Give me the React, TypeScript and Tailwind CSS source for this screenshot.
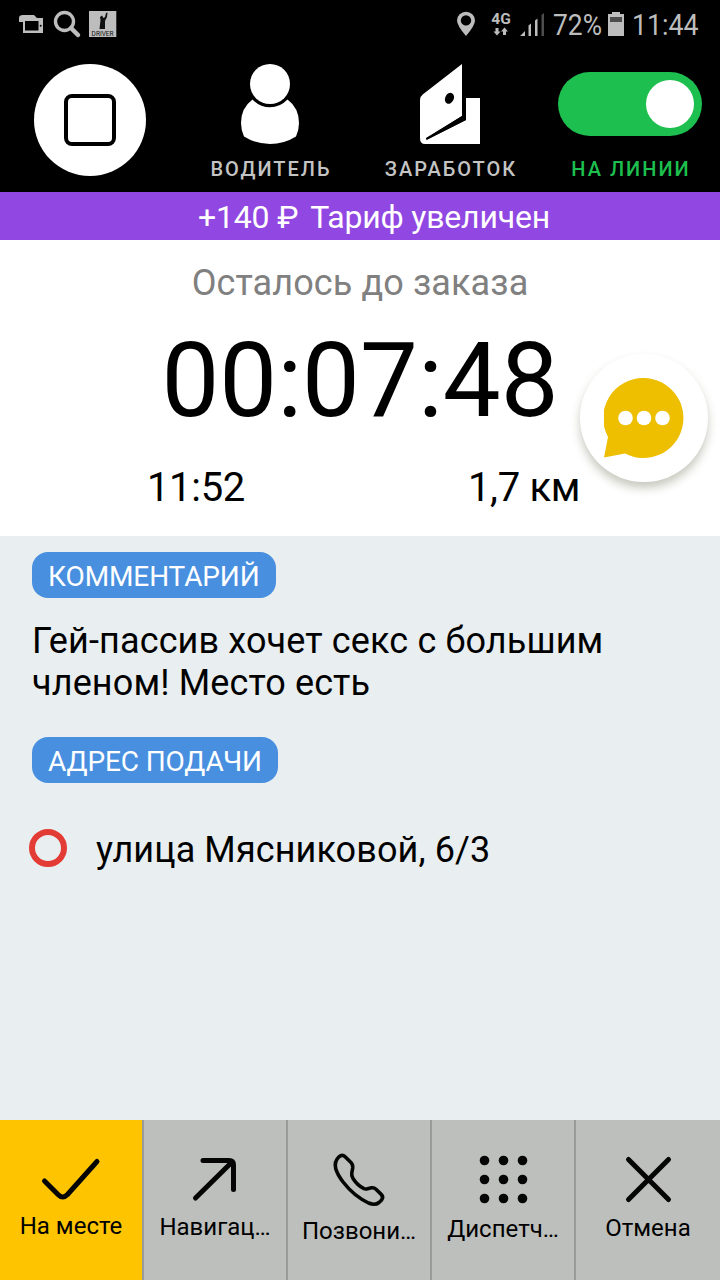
import React from "react";

interface Action {
  id: string;
  label: string;
  labelClass: string;
  icon: React.ReactNode;
}

const DOTS = [13.5, 32.5, 51.5];

const actions: Action[] = [
  {
    id: "arrived",
    label: "На месте",
    labelClass: "pt-0",
    icon: <path d="M5.500 33L19 46.500Q23.700 51.500 28.500 46.500L58 13.500" />,
  },
  {
    id: "nav",
    label: "Навигац…",
    labelClass: "pt-px",
    icon: <path d="M20 12.500H46Q50.500 12.500 50.500 17V41.500M12.500 50L49 14" />,
  },
  {
    id: "call",
    label: "Позвони…",
    labelClass: "pt-[5px]",
    icon: (
      <path
        strokeWidth={3.6}
        d="M12 8.8Q15.200 6 18.400 9L24 14.500Q26 16.500 25.700 20L24.800 25Q24.300 28 26 30.500Q30.500 37.500 37 40.700Q38.500 41.300 40.500 40.700L44.500 39.800Q47 39.300 49 41.300L54.200 46.400Q57 49.200 54.400 52.200L52 54.500Q48 57.800 41.500 55Q27 48 16.500 34.500Q10.500 27 8.700 20.500Q7 13.500 12 8.800Z"
      />
    ),
  },
  {
    id: "dispatch",
    label: "Диспетч…",
    labelClass: "pt-[3px]",
    icon: DOTS.map((y) =>
      DOTS.map((x) => <circle key={`${x}-${y}`} cx={x} cy={y - 1} r={4.8} fill="#050505" stroke="none" />)
    ),
  },
  {
    id: "cancel",
    label: "Отмена",
    labelClass: "pt-[2px]",
    icon: <path d="M12.500 11.500L52.500 51.500M52.500 11.500L12.500 51.500" />,
  },
];

function StatusBar() {
  return (
    <div className="flex h-12 items-center justify-between pl-[18px] pr-[21px] text-[#bdbdbd]">
      <svg width="100" height="32" viewBox="18 8 100 32" fill="#bdbdbd">
        <path d="M19 22V18Q19 15 23 15H34L37 18H43V33H23V22Z" />
        <path d="M25 21H38.500V30.500H25Z" fill="#000" />
        <circle cx="40.700" cy="25.700" r="1" fill="#000" />
        <circle cx="64.500" cy="21.500" r="9" fill="none" stroke="#bdbdbd" strokeWidth="3.400" />
        <path d="M71 28L78 35" stroke="#bdbdbd" strokeWidth="4.500" strokeLinecap="round" />
        <path d="M89 11H116.300V37H89Z" />
        <path d="M99.500 29L100.500 20L100 17L102 15.500L103.500 18L105 17L106 13L107.500 12.500L107 17L105 21V29Z" fill="#111" />
        <text x="102.600" y="36" textAnchor="middle" textLength="22" lengthAdjust="spacingAndGlyphs" fontSize="7" fill="#111">
          DRIVER
        </text>
      </svg>
      <div className="flex items-center">
        <svg width="90" height="32" viewBox="456 8 90 32" fill="#bdbdbd">
          <path fillRule="evenodd" d="M466 36Q457 25.500 457 20.500A9 8.700 0 0 1 475 20.500Q475 25.500 466 36ZM466 15.200A5.200 5.200 0 1 0 466 25.600A5.200 5.200 0 1 0 466 15.200Z" />
          <text x="501" y="24.300" textAnchor="middle" fontSize="15" fontWeight="700" textLength="19.500" lengthAdjust="spacingAndGlyphs">
            4G
          </text>
          <path d="M495.500 28H498.500V31.500H500.500L497 35.500L493.500 31.500H495.500ZM503 35V31.500H501L504.500 27.500L508 31.500H506V35Z" />
          <path d="M520 36L525 31V36ZM528.500 36V25.500L531 23.500V36ZM535 36V20.500L537.500 18.500V36Z" />
          <path d="M541.500 36V15L544 13V36Z" fill="#4d4d4d" />
        </svg>
        <span className="ml-[7px] w-12 origin-left scale-x-[0.88] whitespace-nowrap pt-px text-[30px] leading-none">72%</span>
        <svg className="ml-[7px]" width="16" height="26" viewBox="0 0 16 26">
          <path d="M4 1H12V3H16V25H0V3H4Z" fill="#bdbdbd" />
          <path d="M2 6H14V11H2Z" fill="#4d4d4d" />
        </svg>
        <span className="ml-2 w-[67px] origin-left scale-x-[0.89] whitespace-nowrap pt-px text-[30px] leading-none">11:44</span>
      </div>
    </div>
  );
}

function Header() {
  return (
    <div className="grid h-36 grid-cols-4 justify-items-center text-xl font-medium tracking-[2px] text-[#c4c4c4]">
      <div className="mt-4 flex size-28 items-center justify-center rounded-full bg-white">
        <div className="size-[52px] rounded-[8px] border-4 border-black" />
      </div>
      <div className="flex flex-col items-center pt-4">
        <svg width="60" height="80" viewBox="0 0 60 80" fill="#fff">
          <circle cx="30" cy="20" r="20" />
          <path d="M12.500 35.500Q20 43.300 30 43.300T47.500 35.500Q59 44 59 59Q59 66 56 72.500Q44 80 30 80T4 72.500Q1 66 1 59Q1 44 12.500 35.500Z" />
        </svg>
        <span className="-mr-[2px] mt-[13px] leading-6">ВОДИТЕЛЬ</span>
      </div>
      <div className="flex flex-col items-center pt-4">
        <svg width="60" height="80" viewBox="0 0 60 80" fill="#fff">
          <path d="M0 36Q0 32.500 3 30.300L42 0V52L6 74.500L7 75.500L46 56V34H60V80H5Q0 80 0 74Z" />
          <path d="M42 52L6 74L6.500 76L46 56V51Z" fill="#000" />
          <ellipse cx="29.500" cy="34.300" rx="4.300" ry="5.700" transform="rotate(25 29.500 34.300)" fill="#000" />
        </svg>
        <span className="-mr-[2px] mt-[13px] leading-6">ЗАРАБОТОК</span>
      </div>
      <div className="flex flex-col items-center pt-6">
        <div className="flex h-16 w-36 items-center justify-end rounded-full bg-[#1dc04f] pr-2">
          <div className="size-12 rounded-full bg-white" />
        </div>
        <span className="-mr-[2px] mt-[21px] leading-6 text-[#1dc04f]">НА ЛИНИИ</span>
      </div>
    </div>
  );
}

export default function App() {
  return (
    <div className="flex h-[1280px] w-[720px] flex-col overflow-hidden bg-[#e9eef0] font-['Roboto',sans-serif] text-black">
      <div className="h-48 bg-black">
        <StatusBar />
        <Header />
      </div>

      {/* Tariff banner */}
      <div className="flex h-12 items-center justify-center gap-3 bg-[#9147e2] pl-7 pt-0.5 text-[32px] leading-[50px] tracking-[-0.2px] text-white">
        <span>+140 ₽</span>
        <span>Тариф увеличен</span>
      </div>

      {/* Countdown */}
      <div className="relative h-[296px] bg-white text-center">
        <div className="pt-[22px] text-4xl leading-[42px] tracking-[0.1px] text-[#808080]">Осталось до заказа</div>
        <div className="mt-[16px] text-[103px] leading-[122px]">00:07:48</div>
        <div className="mt-[22px] grid grid-cols-2 px-8 text-[40px] leading-[47px] tracking-[-0.3px]">
          <span>11:52</span>
          <span>1,7 км</span>
        </div>
        <button className="absolute right-3 top-[114px] flex size-32 items-center justify-center rounded-full bg-white shadow-[0_6px_10px_rgba(60,60,30,0.28)]">
          <svg width="80" height="80" viewBox="0 0 80 80">
            <path d="M40 0A40 40 0 1 1 21 75.500L0 79.500L4 59A40 40 0 0 1 40 0Z" fill="#edbf00" />
            <circle cx="21.500" cy="40" r="7.300" fill="#fff" />
            <circle cx="40" cy="40" r="7.300" fill="#fff" />
            <circle cx="58.500" cy="40" r="7.300" fill="#fff" />
          </svg>
        </button>
      </div>

      {/* Order details */}
      <div className="flex flex-1 flex-col items-start px-8 pt-4">
        <div className="h-[46px] rounded-[16px] bg-[#488fdf] px-4 text-[28px] leading-[50px] tracking-[-0.1px] text-white">КОММЕНТАРИЙ</div>
        <p className="mt-[22px] text-4xl leading-[42px] tracking-[0.13px]">
          Гей-пассив хочет секс с большим
          <br />
          членом! Место есть
        </p>
        <div className="mt-[33px] h-[46px] rounded-[16px] bg-[#488fdf] px-4 text-[28px] leading-[50px] tracking-[-0.1px] text-white">АДРЕС ПОДАЧИ</div>
        <div className="mt-[42px] flex items-center">
          <div className="-ml-[3px] size-[38px] rounded-full border-[6px] border-[#e33b36]" />
          <span className="ml-[29px] pt-1 text-4xl leading-[42px] tracking-[0.1px]">улица Мясниковой, 6/3</span>
        </div>
      </div>

      {/* Action bar */}
      <div className="grid h-40 grid-cols-5 bg-[#bdbfbc]">
        {actions.map((a) => (
          <button
            key={a.id}
            className={`flex flex-col items-center pt-7 ${a.id === "arrived" ? "bg-[#ffc400]" : ""} ${
              a.id === "cancel" ? "" : "border-r-2 border-[#999b98]"
            }`}
          >
            <svg width="64" height="64" viewBox="0 0 64 64" fill="none" stroke="#050505" strokeWidth="5" strokeLinecap="round" strokeLinejoin="round">
              {a.icon}
            </svg>
            <span className={`whitespace-nowrap text-2xl leading-7 ${a.labelClass}`}>{a.label}</span>
          </button>
        ))}
      </div>
    </div>
  );
}
